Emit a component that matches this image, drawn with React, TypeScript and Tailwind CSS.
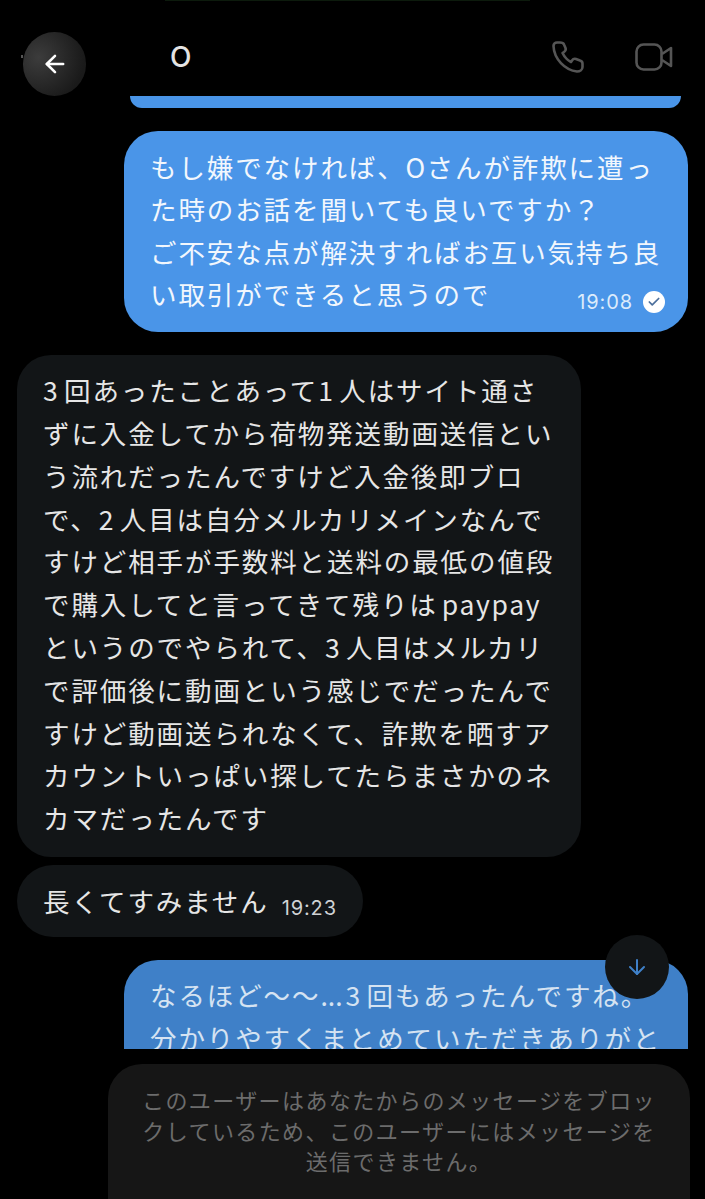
import type { ReactNode } from "react";
import { ArrowDown, ArrowLeft, Check } from "lucide-react";

// digits sit in a wider cell than the font gives them, next to the kana
function Num({ children }: { children: ReactNode }) {
  return <span className="inline-block w-[21px] tracking-normal">{children}</span>;
}

function Line({ children }: { children: ReactNode }) {
  return <p className="whitespace-nowrap">{children}</p>;
}

export default function App() {
  return (
    <div className="relative flex h-[1199px] w-[705px] flex-col overflow-hidden bg-black font-['Noto_Sans_CJK_JP',sans-serif]">
      <div className="absolute left-[165px] top-0 h-px w-[365px] bg-[#0c1a0c]" />
      <div className="absolute left-[21px] top-[55px] h-[3px] w-[2px] bg-[#555555]" />

      <header className="flex h-[96px] shrink-0 items-end">
        <button className="ml-[23px] flex h-[64px] w-[63px] items-center justify-center rounded-full bg-[radial-gradient(circle_at_25%_40%,#3c3c3c,#1a1a1a_75%)] text-white">
          <ArrowLeft size={28} strokeWidth={2.2} />
        </button>
        <span className="mb-[20px] ml-[84px] font-['Inter',sans-serif] text-[28px] font-medium leading-[38px] text-[#e4e4e4]">O</span>
        <div className="mb-[23px] ml-auto mr-[32px] flex items-center gap-[51px] text-[#555555]">
          <svg width="32" height="32" viewBox="0 0 32 32" fill="none" stroke="currentColor" strokeWidth="2.6" strokeLinejoin="round">
            <path d="M8 1.5H5C3 1.5 1.5 3 1.5 5C2 18 13 29 25 30.5C28 30.5 30.5 28.5 30.5 26V22.5C30.5 21 29.5 20 28 19.5L24 18C22.5 17.5 21 18 20 19.5L19 21C15 19 12.5 16 10.5 12L12 11C13.5 10 14 8.5 13.5 7L12 3.5C11.5 2 10 1.5 8 1.5Z" />
          </svg>
          <svg width="38" height="28" viewBox="0 0 38 28" fill="none" stroke="currentColor" strokeWidth="2.6" strokeLinejoin="round">
            <rect x="1.5" y="1.5" width="25" height="25" rx="7" />
            <path d="M27 11L36 5V23L27 17" />
          </svg>
        </div>
      </header>

      <main className="flex h-[953px] shrink-0 flex-col overflow-hidden text-[26.5px] leading-[42.8px] tracking-[1.9px]">
        <div className="ml-[130px] h-[12px] w-[551px] shrink-0 rounded-b-[26px] bg-[#4a95e8]" />

        <div className="ml-[124px] mt-[23px] w-[564px] shrink-0 rounded-[34px] bg-[#4a95e8] pb-[17px] pl-[26px] pr-[23px] pt-[15px] leading-[42.3px] text-[#f2f7fd]">
          <Line>もし嫌でなければ、<Num>O</Num>さんが詐欺に遭っ</Line>
          <Line>た時のお話を聞いても良いですか？</Line>
          <Line>ご不安な点が解決すればお互い気持ち良</Line>
          <div className="flex items-end justify-between">
            <Line>い取引ができると思うので</Line>
            <div className="flex items-center gap-[10px] font-['Inter',sans-serif] text-[20px] leading-[26px] tracking-[0.9px] text-[#dcebfb]">
              <span>19:08</span>
              <span className="flex h-[22px] w-[22px] items-center justify-center rounded-full bg-white text-[#4c6f9c]">
                <Check size={14} strokeWidth={3} />
              </span>
            </div>
          </div>
        </div>

        <div className="ml-[17px] mt-[23px] w-[564px] shrink-0 rounded-[34px] bg-[#121517] pb-[17px] pl-[26px] pt-[14px] text-[#e6e6e6]">
          <Line><Num>3</Num>回あったことあって<Num>1</Num>人はサイト通さ</Line>
          <Line>ずに入金してから荷物発送動画送信とい</Line>
          <Line>う流れだったんですけど入金後即ブロ</Line>
          <Line>で、<Num>2</Num>人目は自分メルカリメインなんで</Line>
          <Line>すけど相手が手数料と送料の最低の値段</Line>
          <Line>で購入してと言ってきて残りは<span className="ml-[4px] tracking-[1.7px]">paypay</span></Line>
          <Line>というのでやられて、<Num>3</Num>人目はメルカリ</Line>
          <Line>で評価後に動画という感じでだったんで</Line>
          <Line>すけど動画送られなくて、詐欺を晒すア</Line>
          <Line>カウントいっぱい探してたらまさかのネ</Line>
          <Line>カマだったんです</Line>
        </div>

        <div className="ml-[17px] mt-[8px] flex h-[72px] w-[346px] shrink-0 items-center gap-[13px] rounded-[36px] bg-[#121517] pl-[26px] text-[#e6e6e6]">
          <Line>長くてすみません</Line>
          <span className="pt-[14px] font-['Inter',sans-serif] text-[20px] leading-[26px] tracking-[0.9px] text-[#cfd2d4]">19:23</span>
        </div>

        <div className="ml-[124px] mt-[23px] w-[564px] shrink-0 rounded-t-[34px] bg-[#3f80c8] pl-[26px] pt-[14px] text-[#d5e3f2]">
          <Line>なるほど〜〜<span className="inline-block w-[25px] tracking-normal">...</span><Num>3</Num>回もあったんですね。</Line>
          <Line>分かりやすくまとめていただきありがと</Line>
        </div>
      </main>

      <button className="absolute left-[605px] top-[935px] flex h-[64px] w-[64px] items-center justify-center rounded-full bg-[#121517] text-[#3f80c8]">
        <ArrowDown size={24} strokeWidth={2} />
      </button>

      <footer className="ml-[108px] mt-[15px] flex w-[582px] flex-1 flex-col items-center rounded-t-[34px] bg-[#161616] pt-[20px] text-center text-[22px] leading-[30.5px] tracking-[1.4px] text-[#6c6c6c]">
        <Line>このユーザーはあなたからのメッセージをブロッ</Line>
        <Line>クしているため、このユーザーにはメッセージを</Line>
        <Line>送信できません。</Line>
      </footer>
    </div>
  );
}
